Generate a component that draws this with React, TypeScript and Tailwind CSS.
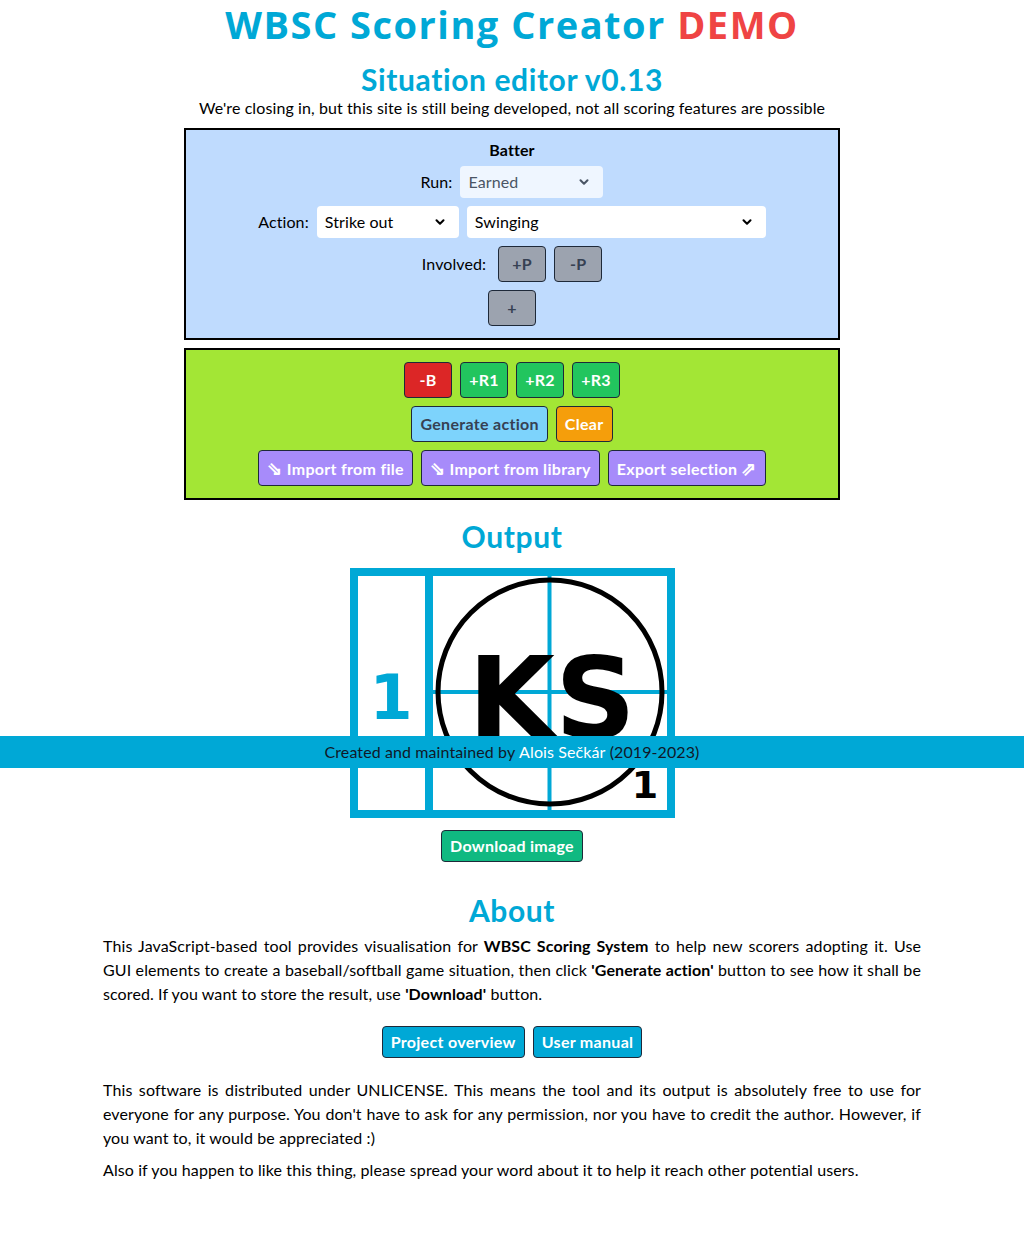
import React from 'react';
import { ChevronDown } from 'lucide-react';

const font = { fontFamily: 'Lato, "Open Sans", sans-serif' };

function Select({ value, width, disabled }: { value: string; width: string; disabled?: boolean }) {
  return (
    <div
      className={`${width} h-8 rounded flex items-center justify-between pl-2 pr-3 ${
        disabled ? 'bg-[#eff6ff] text-gray-600' : 'bg-white text-black'
      }`}
    >
      <span>{value}</span>
      <ChevronDown className="w-3.5 h-3.5" strokeWidth={3.5} />
    </div>
  );
}

function Btn({ children, className }: { children: React.ReactNode; className: string }) {
  return (
    <button className={`h-9 px-2 rounded border border-gray-800 font-bold tracking-[0.3px] ${className}`}>
      {children}
    </button>
  );
}

function ScoreImage() {
  return (
    <svg width="325" height="250" viewBox="0 0 325 250" className="mt-[14px]">
      <rect x="0" y="0" width="325" height="250" fill="white" />
      <line x1="199.5" y1="8" x2="199.5" y2="242" stroke="#00a8d6" strokeWidth="4" />
      <line x1="83" y1="124" x2="317" y2="124" stroke="#00a8d6" strokeWidth="4" />
      <rect x="4" y="4" width="317" height="242" fill="none" stroke="#00a8d6" strokeWidth="8" />
      <line x1="79" y1="4" x2="79" y2="246" stroke="#00a8d6" strokeWidth="8" />
      <circle cx="200" cy="124" r="112" fill="none" stroke="black" strokeWidth="5" />
      <text
        x="202"
        y="169"
        textAnchor="middle"
        fontFamily="DejaVu Sans, sans-serif"
        fontWeight="bold"
        fontSize="112"
        textLength="168"
        lengthAdjust="spacingAndGlyphs"
      >
        KS
      </text>
      <text x="41" y="151" textAnchor="middle" fontFamily="DejaVu Sans, sans-serif" fontWeight="bold" fontSize="62" fill="#00a8d6">
        1
      </text>
      <text x="295" y="230" textAnchor="middle" fontFamily="DejaVu Sans, sans-serif" fontWeight="bold" fontSize="38">
        1
      </text>
    </svg>
  );
}

export default function App() {
  return (
    <div className="relative bg-white text-black text-base tracking-[0.1px] min-h-[1246px]" style={font}>
      <div className="flex flex-col items-center pt-1">
        <h1
          className="text-[38px] leading-[40px] font-bold text-[#00a8d6] tracking-[1.5px]"
          style={{ fontFamily: '"Open Sans", Lato, sans-serif' }}
        >
          WBSC Scoring Creator <span className="text-[#ef4444]">DEMO</span>
        </h1>
        <h2 className="mt-[19px] text-[30px] leading-[32px] font-bold text-[#00a8d6] tracking-[0.6px]">
          Situation editor v0.13
        </h2>
        <p className="mt-[1px] leading-6">
          We're closing in, but this site is still being developed, not all scoring features are possible
        </p>

        {/* Batter */}
        <div className="mt-2 w-[656px] border-2 border-black bg-[#bfdbfe] pt-2 pb-3 flex flex-col items-center">
          <div className="font-bold leading-6">Batter</div>
          <div className="mt-1 flex flex-col items-center gap-2">
            <div className="flex items-center gap-2">
              <span>Run:</span>
              <Select value="Earned" width="w-[143px]" disabled />
            </div>
            <div className="flex items-center gap-2">
              <span>Action:</span>
              <Select value="Strike out" width="w-[142px]" />
              <Select value="Swinging" width="w-[299px]" />
            </div>
            <div className="flex items-center gap-2">
              <span className="mr-1">Involved:</span>
              <Btn className="w-12 bg-[#9ca3af] text-gray-700">+P</Btn>
              <Btn className="w-12 bg-[#9ca3af] text-gray-700">-P</Btn>
            </div>
            <Btn className="w-12 bg-[#9ca3af] text-gray-700">+</Btn>
          </div>
        </div>

        {/* Actions */}
        <div className="mt-2 w-[656px] border-2 border-black bg-[#a3e635] py-3 flex flex-col items-center gap-2">
          <div className="flex gap-2">
            <Btn className="w-12 bg-[#dc2626] text-white">-B</Btn>
            <Btn className="w-12 bg-[#22c55e] text-white">+R1</Btn>
            <Btn className="w-12 bg-[#22c55e] text-white">+R2</Btn>
            <Btn className="w-12 bg-[#22c55e] text-white">+R3</Btn>
          </div>
          <div className="flex gap-2">
            <Btn className="bg-[#7dd3fc] text-gray-700">Generate action</Btn>
            <Btn className="bg-[#f59e0b] text-white">Clear</Btn>
          </div>
          <div className="flex gap-2">
            <Btn className="bg-[#a78bfa] text-white">
              <span className="text-lg">⇘</span> Import from file
            </Btn>
            <Btn className="bg-[#a78bfa] text-white">
              <span className="text-lg">⇘</span> Import from library
            </Btn>
            <Btn className="bg-[#a78bfa] text-white">
              Export selection <span className="text-lg">⇗</span>
            </Btn>
          </div>
        </div>

        {/* Output */}
        <h2 className="mt-[18px] text-[30px] leading-9 font-bold text-[#00a8d6] tracking-[0.6px]">Output</h2>
        <ScoreImage />
        <button className="mt-3 h-8 px-2 rounded border border-gray-800 bg-[#10b981] text-white font-bold tracking-[0.3px]">
          Download image
        </button>

        {/* About */}
        <h2 className="mt-[30px] text-[30px] leading-9 font-bold text-[#00a8d6] tracking-[0.6px]">About</h2>
        <div className="w-[818px] mt-[6px] leading-6 text-justify">
          <p>
            This JavaScript-based tool provides visualisation for <b>WBSC Scoring System</b> to help new scorers
            adopting it. Use GUI elements to create a baseball/softball game situation, then click{' '}
            <b>'Generate action'</b> button to see how it shall be scored. If you want to store the result, use{' '}
            <b>'Download'</b> button.
          </p>
          <div className="mt-5 flex justify-center gap-2">
            <button className="h-8 px-2 rounded border border-gray-800 bg-[#00a8d6] text-white font-bold tracking-[0.3px]">
              Project overview
            </button>
            <button className="h-8 px-2 rounded border border-gray-800 bg-[#00a8d6] text-white font-bold tracking-[0.3px]">
              User manual
            </button>
          </div>
          <p className="mt-5">
            This software is distributed under UNLICENSE. This means the tool and its output is absolutely free to use
            for everyone for any purpose. You don't have to ask for any permission, nor you have to credit the author.
            However, if you want to, it would be appreciated :)
          </p>
          <p className="mt-2">
            Also if you happen to like this thing, please spread your word about it to help it reach other potential
            users.
          </p>
        </div>
      </div>

      {/* Footer bar overlaying the page */}
      <div className="absolute left-0 right-0 top-[736px] h-8 bg-[#00a8d6] flex items-center justify-center text-gray-900">
        Created and maintained by&nbsp;<span className="text-white">Alois Sečkár</span>&nbsp;(2019-2023)
      </div>
    </div>
  );
}
